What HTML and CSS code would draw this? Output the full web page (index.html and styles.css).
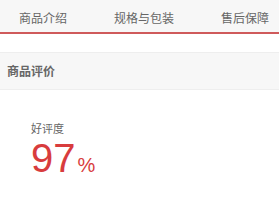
FILE: index.html
```html
<!DOCTYPE html>
<html lang="zh">
<head>
<meta charset="utf-8">
<link rel="stylesheet" href="styles.css">
</head>
<body>
<div class="tabs">
  <div class="tab">商品介绍</div>
  <div class="tab">规格与包装</div>
  <div class="tab">售后保障</div>
</div>
<div class="spacer"></div>
<div class="section-head">商品评价</div>
<div class="rate">
  <div class="rate-label">好评度</div>
  <div class="rate-value">97<span class="pct">%</span></div>
</div>
</body>
</html>
```

FILE: styles.css
```css
html, body {
  margin: 0;
  padding: 0;
  background: #fff;
  font-family: "Microsoft YaHei", "Noto Sans CJK SC", "Liberation Sans", sans-serif;
}
.tabs {
  display: flex;
  gap: 47px;
  padding: 2px 0 0 19px;
  height: 34px;
  align-items: center;
  background: #f7f7f7;
  border-bottom: 2px solid #cf5a5b;
  box-sizing: border-box;
  white-space: nowrap;
}
.tab {
  font-size: 12px;
  color: #666;
}
.spacer {
  height: 18px;
}
.section-head {
  height: 36px;
  line-height: 36px;
  background: #f7f7f7;
  border-top: 1px solid #eee;
  border-bottom: 1px solid #eee;
  padding-left: 7px;
  font-size: 12px;
  font-weight: bold;
  color: #666;
}
.rate {
  padding: 31px 0 0 31px;
}
.rate-label {
  font-size: 11px;
  color: #666;
  line-height: 14px;
}
.rate-value {
  color: #d83c3d;
  font-family: "Liberation Sans", Arial, sans-serif;
  font-size: 40px;
  line-height: 40px;
  margin-top: 3px;
}
.pct {
  font-size: 20px;
  margin-left: 2px;
}
```
